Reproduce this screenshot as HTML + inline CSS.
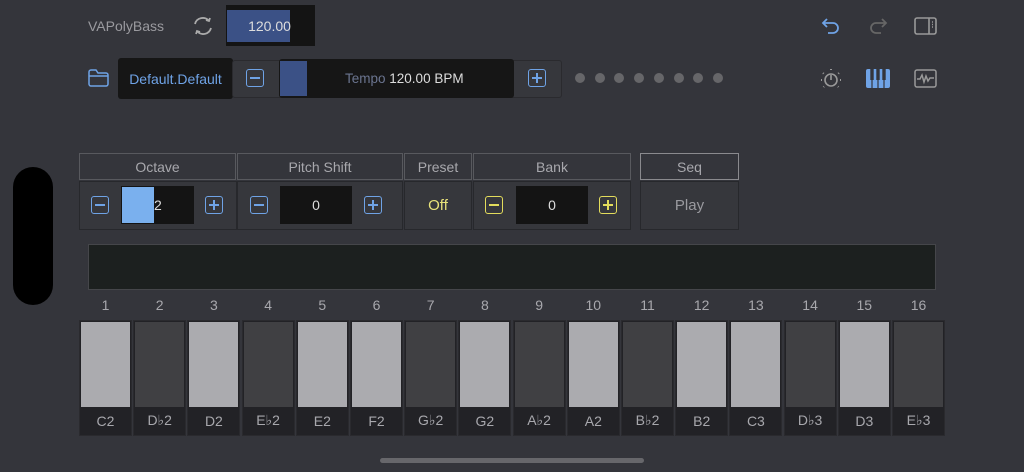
<!DOCTYPE html>
<html><head><meta charset="utf-8"><style>
*{margin:0;padding:0;box-sizing:border-box}
body{width:1024px;height:472px;background:#34353b;font-family:"Liberation Sans",sans-serif;position:relative;overflow:hidden;color:#aaa}
.a{position:absolute}
.c{display:flex;align-items:center;justify-content:center}
.hdr{position:absolute;top:153px;height:27px;border:1px solid #58595e;color:#a8a8ad;font-size:14px;display:flex;align-items:center;justify-content:center}
.bod{position:absolute;top:181px;height:49px;border:1px solid #27282c;background:#36373c}
.pm{position:absolute;width:18px;height:18px;border:1.5px solid #6fa3e6;border-radius:3px}
.pm::before{content:"";position:absolute;left:3px;right:3px;top:7px;height:1.5px;background:#6fa3e6}
.pm.p::after{content:"";position:absolute;top:3px;bottom:3px;left:7px;width:1.5px;background:#6fa3e6}
.pm.y{border-color:#e3dc5c !important}
.pm.y::before,.pm.y::after{background:#e3dc5c !important}
.dot{position:absolute;top:73px;width:10px;height:10px;border-radius:50%;background:#666669}
.key{position:absolute;top:320px;width:53px;height:116px;background:#222226;border:1px solid #2a2a2e}
.key i{position:absolute;left:1px;right:1px;top:1px;height:85px;display:block}
.key b{position:absolute;left:0;right:0;bottom:0;height:29px;font-weight:normal;font-size:14px;color:#a8a8ad;display:flex;align-items:center;justify-content:center}
.num{position:absolute;top:297px;width:53px;text-align:center;font-size:14px;color:#a8a8ad}
</style></head><body>
<div class="a" style="left:88px;top:18px;font-size:14px;color:#9a9a9f">VAPolyBass</div>
<svg class="a" style="left:191px;top:14px" width="24" height="24" viewBox="0 0 24 24" fill="none" stroke="#aaa" stroke-width="1.8"><path d="M4 10a8 8 0 0 1 14-3"/><path d="M15 6l3 1 1-3"/><path d="M20 14a8 8 0 0 1-14 3"/><path d="M9 18l-3-1-1 3"/></svg>
<div class="a" style="left:226px;top:5px;width:89px;height:41px;background:#141414"></div>
<div class="a c" style="left:227px;top:10px;width:63px;height:32px;background:#3b5186;color:#ddd;font-size:14px;padding-left:22px">120.00</div>
<svg class="a" style="left:87px;top:68px" width="23" height="20" viewBox="0 0 23 20" fill="none" stroke="#6fa3e6" stroke-width="1.5"><path d="M2 4v12a2 2 0 0 0 2 2h15a2 2 0 0 0 2-2V7a2 2 0 0 0-2-2H11L9 2H4a2 2 0 0 0-2 2z"/><path d="M2 8h19"/></svg>
<div class="a c" style="left:118px;top:58px;width:115px;height:41px;background:#161616;border-radius:3px;color:#6fa3e6;font-size:14px">Default.Default</div>
<div class="a" style="left:232px;top:60px;width:330px;height:38px;border:1px solid #2a2a2e;border-radius:3px;background:#36373c"></div>
<div class="pm" style="left:246px;top:69px"></div>
<div class="a" style="left:279px;top:59px;width:235px;height:39px;background:#161616;border-radius:3px"></div>
<div class="a" style="left:280px;top:61px;width:27px;height:35px;background:#3b5186"></div>
<div class="a" style="left:345px;top:71px;font-size:13.5px;color:#6b7590">Tempo <span style="color:#ddd">120.00 BPM</span></div>
<div class="pm p" style="left:528px;top:69px"></div>
<div class="dot" style="left:575px"></div><div class="dot" style="left:595px"></div><div class="dot" style="left:614px"></div><div class="dot" style="left:634px"></div><div class="dot" style="left:654px"></div><div class="dot" style="left:674px"></div><div class="dot" style="left:693px"></div><div class="dot" style="left:713px"></div>
<svg class="a" style="left:820px;top:15px" width="22" height="22" viewBox="0 0 22 22" fill="none" stroke="#6fa3e6" stroke-width="1.8"><path d="M3 8h10a5 5 0 0 1 0 10H8"/><path d="M7 4L3 8l4 4"/></svg>
<svg class="a" style="left:867px;top:15px" width="22" height="22" viewBox="0 0 22 22" fill="none" stroke="#666" stroke-width="1.8"><path d="M19 8H9a5 5 0 0 0 0 10h5"/><path d="M15 4l4 4-4 4"/></svg>
<svg class="a" style="left:914px;top:16px" width="23" height="20" viewBox="0 0 23 20" fill="none" stroke="#999" stroke-width="1.6"><rect x="1" y="2" width="21" height="16" rx="2"/><path d="M15 2v16M18 6h1M18 8.5h1M18 11h1"/></svg>
<svg class="a" style="left:819px;top:67px" width="24" height="24" viewBox="0 0 24 24" fill="none" stroke="#999" stroke-width="1.6"><circle cx="12" cy="13" r="6"/><path d="M12 8v5"/><g stroke-width="2"><path d="M12 2v1M4 6l.7.7M20 6l-.7.7M2 13h1M21 13h1M4.5 20l.5-.5M19.5 20l-.5-.5"/></g></svg>
<svg class="a" style="left:866px;top:69px" width="24" height="19" viewBox="0 0 24 19"><rect x="0" y="0" width="24" height="19" rx="2" fill="#6fa3e6"/><path d="M6 0v19M12 0v19M18 0v19" stroke="#34353b" stroke-width="1.2"/><rect x="4.3" y="0" width="3.4" height="11" fill="#34353b"/><rect x="10.3" y="0" width="3.4" height="11" fill="#34353b"/><rect x="16.3" y="0" width="3.4" height="11" fill="#34353b"/></svg>
<svg class="a" style="left:914px;top:69px" width="23" height="19" viewBox="0 0 23 19" fill="none" stroke="#999" stroke-width="1.5"><rect x="1" y="1" width="21" height="17" rx="2"/><path d="M3 10h3l2-4 2 7 2-6 2 5 2-3h4"/></svg>
<div class="a" style="left:13px;top:167px;width:40px;height:138px;background:#000;border-radius:20px"></div>
<div class="hdr" style="left:79px;width:157px">Octave</div>
<div class="hdr" style="left:237px;width:166px">Pitch Shift</div>
<div class="hdr" style="left:404px;width:68px">Preset</div>
<div class="hdr" style="left:473px;width:158px">Bank</div>
<div class="hdr" style="left:640px;width:99px;border-color:#8a8a8e">Seq</div>
<div class="bod" style="left:79px;width:158px"></div>
<div class="bod" style="left:237px;width:166px"></div>
<div class="bod" style="left:404px;width:68px"></div>
<div class="bod" style="left:473px;width:158px"></div>
<div class="bod" style="left:640px;width:99px"></div>
<div class="pm" style="left:91px;top:196px"></div>
<div class="a" style="left:121px;top:186px;width:73px;height:38px;background:#141414"></div>
<div class="a" style="left:122px;top:187px;width:32px;height:36px;background:#7ab0ee"></div>
<div class="a" style="left:154px;top:197px;font-size:14px;color:#ddd">2</div>
<div class="pm p" style="left:205px;top:196px"></div>
<div class="pm" style="left:250px;top:196px"></div>
<div class="a c" style="left:280px;top:186px;width:72px;height:38px;background:#141414;font-size:14px;color:#ddd">0</div>
<div class="pm p" style="left:364px;top:196px"></div>
<div class="a c" style="left:404px;top:192px;width:68px;height:26px;font-size:15px;color:#e8e27a">Off</div>
<div class="pm y" style="left:485px;top:196px"></div>
<div class="a c" style="left:516px;top:186px;width:72px;height:38px;background:#141414;font-size:14px;color:#ddd">0</div>
<div class="pm y p" style="left:599px;top:196px"></div>
<div class="a c" style="left:640px;top:192px;width:99px;height:26px;font-size:15px;color:#9a9a9f">Play</div>
<div class="a" style="left:88px;top:244px;width:848px;height:46px;background:#1c201f;border:1px solid #45464a"></div>
<div id="k"></div>
<div class="a" style="left:380px;top:458px;width:264px;height:5px;border-radius:3px;background:#67676b"></div>
<script>
var n=["C2","D♭2","D2","E♭2","E2","F2","G♭2","G2","A♭2","A2","B♭2","B2","C3","D♭3","D3","E♭3"],w=[1,0,1,0,1,1,0,1,0,1,0,1,1,0,1,0],h="";
for(var i=0;i<16;i++){var x=79+i*54.2;h+='<div class="num" style="left:'+x+'px">'+(i+1)+'</div><div class="key" style="left:'+x+'px"><i style="background:'+(w[i]?'#ababaf':'#404043')+'"></i><b>'+n[i]+'</b></div>';}
document.getElementById("k").innerHTML=h;
</script>
</body></html>
